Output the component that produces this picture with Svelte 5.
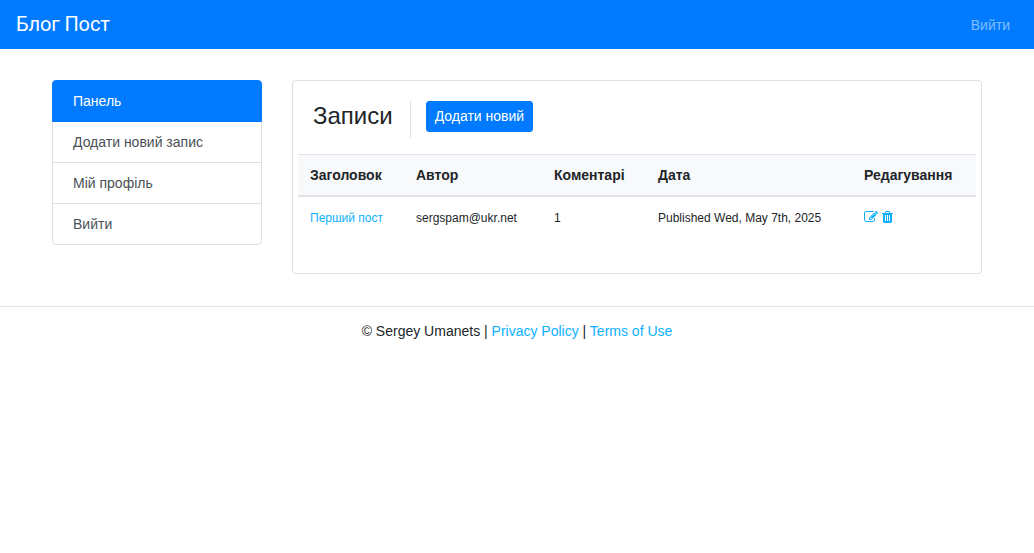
<script>
  const menu = ['Панель', 'Додати новий запис', 'Мій профіль', 'Вийти'];
  const columns = [
    { title: 'Заголовок', width: 106 },
    { title: 'Автор', width: 138 },
    { title: 'Коментарі', width: 104 },
    { title: 'Дата', width: 206 },
    { title: 'Редагування', width: 124 }
  ];
  const posts = [
    { title: 'Перший пост', author: 'sergspam@ukr.net', comments: 1, date: 'Published Wed, May 7th, 2025' }
  ];
</script>

<nav class="navbar">
  <a class="brand" href="#home">Блог Пост</a>
  <a class="logout" href="#logout">Вийти</a>
</nav>

<main class="container">
  <aside class="list-group">
    {#each menu as item, i}
      <a class="item" class:active={i === 0} href="#menu">{item}</a>
    {/each}
  </aside>

  <section class="card">
    <header class="card-head">
      <h1>Записи</h1>
      <div class="actions"><a class="btn" href="#new">Додати новий</a></div>
    </header>
    <table>
      <colgroup>
        {#each columns as col}<col style="width: {col.width}px" />{/each}
      </colgroup>
      <thead>
        <tr>{#each columns as col}<th>{col.title}</th>{/each}</tr>
      </thead>
      <tbody>
        {#each posts as post}
          <tr>
            <td><a href="#post">{post.title}</a></td>
            <td>{post.author}</td>
            <td>{post.comments}</td>
            <td>{post.date}</td>
            <td>
              <div class="tools">
                <a href="#edit" aria-label="Редагувати">
                  <svg width="14" height="14" viewBox="0 0 1792 1792"><path d="M888 1184l116-116-152-152-116 116v56h96v96h56zm440-720q-16-16-33 1l-350 350q-17 17-1 33t33-1l350-350q17-17 1-33zm80 594v190q0 119-84.500 203.500t-203.500 84.500h-832q-119 0-203.500-84.500t-84.500-203.500v-832q0-119 84.500-203.500t203.500-84.500h832q63 0 117 25 15 7 18 23 3 17-9 29l-49 49q-14 14-32 8-23-6-45-6h-832q-66 0-113 47t-47 113v832q0 66 47 113t113 47h832q66 0 113-47t47-113v-126q0-13 9-22l64-64q15-15 35-7t20 29zm-96-738l288 288-672 672h-288v-288zm444 132l-92 92-288-288 92-92q28-28 68-28t68 28l152 152q28 28 28 68t-28 68z" /></svg>
                </a>
                <a href="#delete" aria-label="Видалити">
                  <svg width="11" height="14" viewBox="192 0 1408 1792"><path d="M704 1376v-704q0-14-9-23t-23-9h-64q-14 0-23 9t-9 23v704q0 14 9 23t23 9h64q14 0 23-9t9-23zm256 0v-704q0-14-9-23t-23-9h-64q-14 0-23 9t-9 23v704q0 14 9 23t23 9h64q14 0 23-9t9-23zm256 0v-704q0-14-9-23t-23-9h-64q-14 0-23 9t-9 23v704q0 14 9 23t23 9h64q14 0 23-9t9-23zm-544-992h448l-48-117q-7-9-17-11h-317q-10 2-17 11zm928 32v64q0 14-9 23t-23 9h-96v948q0 83-47 143.500t-113 60.500h-832q-66 0-113-58.500t-47-141.500v-952h-96q-14 0-23-9t-9-23v-64q0-14 9-23t23-9h309l70-167q15-37 54-63t79-26h320q40 0 79 26t54 63l70 167h309q14 0 23 9t9 23z" /></svg>
                </a>
              </div>
            </td>
          </tr>
        {/each}
      </tbody>
    </table>
  </section>
</main>

<footer>© Sergey Umanets | <a href="#privacy">Privacy Policy</a> | <a href="#terms">Terms of Use</a></footer>

<style>
  :global(body) {
    background: #fff;
    color: #212529;
    font: 14px/16px "Liberation Sans", Arial, sans-serif;
  }
  :global(*) { box-sizing: border-box; }
  a { color: #0db0ff; text-decoration: none; }
  .navbar {
    display: flex;
    align-items: center;
    justify-content: space-between;
    height: 49px;
    padding: 0 24px 0 16px;
    background: #007bff;
  }
  .brand { padding-bottom: 2px; color: #fff; font: 20px/30px Roboto, sans-serif; letter-spacing: -.1px; }
  .logout { color: rgba(255, 255, 255, .5); }
  .container {
    display: grid;
    grid-template-columns: 210px 690px;
    column-gap: 30px;
    align-items: start;
    justify-content: center;
    padding: 31px 0 32px;
  }
  .list-group { display: flex; flex-direction: column; }
  .item {
    padding: 12px 20px;
    border: 1px solid #dfdfdf;
    margin-bottom: -1px;
    color: #495057;
  }
  .item:first-child { border-radius: 4px 4px 0 0; }
  .item:last-child { border-radius: 0 0 4px 4px; margin-bottom: 0; }
  .item.active { background: #007bff; border-color: #007bff; color: #fff; z-index: 1; }
  .card {
    height: 194px;
    padding: 20px 5px;
    border: 1px solid #dfdfdf;
    border-radius: 4px;
  }
  .card-head { display: flex; padding: 0 15px; margin-bottom: 16px; }
  h1 { margin: 0; padding-right: 17px; font-size: 24px; line-height: 29px; font-weight: 400; }
  .actions { height: 37px; padding-left: 15px; border-left: 1px solid #dee2e6; }
  .btn {
    display: block;
    height: 31px;
    padding: 0 8px;
    border: 1px solid #007bff;
    border-radius: 3px;
    background: #007bff;
    color: #fff;
    line-height: 29px;
  }
  table { width: 678px; table-layout: fixed; border-collapse: separate; border-spacing: 0; }
  th {
    padding: 12px;
    border-top: 1px solid #dee2e6;
    border-bottom: 2px solid #dee2e6;
    background: #f8f9fa;
    text-align: left;
    font-weight: 700;
  }
  td { padding: 13px 12px 12px; font-size: 12px; white-space: nowrap; }
  .tools { display: flex; align-items: flex-start; gap: 4px; height: 16px; }
  .tools a { display: flex; }
  svg { display: block; fill: currentColor; }
  footer { border-top: 1px solid #e5e5e5; padding-top: 16px; text-align: center; }
</style>
